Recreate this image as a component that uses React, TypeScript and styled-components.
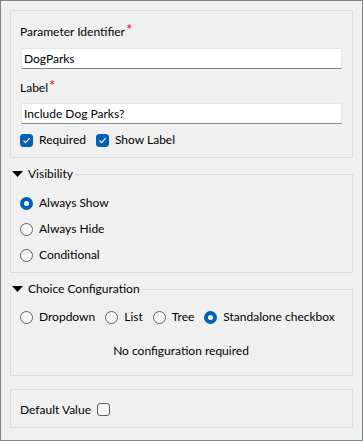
import styled, { createGlobalStyle } from 'styled-components';

const GlobalStyle = createGlobalStyle`
  html, body {
    margin: 0;
    padding: 0;
    background: #ffffff;
  }
  body {
    font-family: Lato, "Noto Sans", sans-serif;
    font-size: 12px;
    color: #000;
  }
`;

const Frame = styled.div`
  box-sizing: border-box;
  width: 363px;
  height: 441px;
  border: 1px solid #80848c;
  background: #f0f0f0;
  padding: 9px;
  display: flex;
  flex-direction: column;
`;

const Panel = styled.div<{ $mt?: number; $pad: string }>`
  border: 1px solid #dcdcdc;
  padding: ${(p) => p.$pad};
  margin-top: ${(p) => p.$mt ?? 0}px;
  display: flex;
  flex-direction: column;
`;

const FieldLabel = styled.div<{ $mt?: number }>`
  line-height: 16px;
  margin-top: ${(p) => p.$mt ?? 0}px;
`;

const Star = styled.span`
  color: #e81123;
  font-size: 15px;
  line-height: 0;
  position: relative;
  top: -1px;
  margin-left: 1px;
`;

const TextBox = styled.input<{ $mt: number }>`
  box-sizing: border-box;
  height: 21px;
  margin: ${(p) => p.$mt}px 0 0 1px;
  padding: 0 2px;
  border: 1px solid #e6e6e6;
  border-bottom-color: #868686;
  background: #fff;
  font: inherit;
  color: #000;
  outline: none;
`;

const Row = styled.div<{ $gap: number; $mt?: number }>`
  display: flex;
  align-items: center;
  gap: ${(p) => p.$gap}px;
  margin-top: ${(p) => p.$mt ?? 0}px;
  white-space: nowrap;
`;

const Option = styled.label`
  display: flex;
  align-items: center;
  gap: 6px;
  line-height: 16px;
`;

const Box = styled.span<{ $on?: boolean }>`
  box-sizing: border-box;
  width: 13px;
  height: 13px;
  border-radius: 3px;
  display: inline-flex;
  align-items: center;
  justify-content: center;
  background: ${(p) => (p.$on ? '#005fb8' : '#f7f7f7')};
  border: 1px solid ${(p) => (p.$on ? '#005fb8' : '#5f5f5f')};
`;

const Dot = styled.span<{ $on?: boolean }>`
  box-sizing: border-box;
  width: 13px;
  height: 13px;
  border-radius: 50%;
  background: ${(p) => (p.$on ? '#fff' : '#f7f7f7')};
  border: ${(p) => (p.$on ? '4px solid #005fb8' : '1px solid #5f5f5f')};
`;

const Group = styled.fieldset<{ $mt: number }>`
  margin: ${(p) => p.$mt}px 0 0;
  border: 1px solid #dcdcdc;
  padding: 0 10px 4px 9px;
  min-width: 0;
`;

const Legend = styled.legend`
  display: flex;
  align-items: center;
  gap: 5px;
  padding: 0 2px 0 1px;
  margin-left: -9px;
  line-height: 16px;
`;

const RadioList = styled.div`
  display: flex;
  flex-direction: column;
  padding-top: 8px;
`;

const RadioRow = styled(Option)`
  height: 26px;
`;

const Note = styled.div`
  text-align: center;
  line-height: 16px;
  margin: 18px 0 12px;
`;

const Check = ({ on }: { on?: boolean }) => (
  <Box $on={on}>
    {on && (
      <svg width="9" height="9" viewBox="0 0 9 9">
        <path d="M1.5 4.6 L3.6 6.6 L7.6 2.2" fill="none" stroke="#fff" strokeWidth="1.2" />
      </svg>
    )}
  </Box>
);

const Caret = () => (
  <svg width="11" height="6" viewBox="0 0 11 6">
    <polygon points="0,0 11,0 5.5,6" fill="#000" />
  </svg>
);

export default function App() {
  return (
    <>
      <GlobalStyle />
      <Frame>
        <Panel $pad="13px 10px 9px 9px">
          <FieldLabel>
            Parameter Identifier<Star>*</Star>
          </FieldLabel>
          <TextBox $mt={8} defaultValue="DogParks" />
          <FieldLabel $mt={11}>
            Label<Star>*</Star>
          </FieldLabel>
          <TextBox $mt={7} defaultValue="Include Dog Parks?" />
          <Row $gap={10} $mt={8}>
            <Option>
              <Check on />
              Required
            </Option>
            <Option>
              <Check on />
              Show Label
            </Option>
          </Row>
        </Panel>

        <Group $mt={8}>
          <Legend>
            <Caret />
            Visibility
          </Legend>
          <RadioList>
            <RadioRow>
              <Dot $on />
              Always Show
            </RadioRow>
            <RadioRow>
              <Dot />
              Always Hide
            </RadioRow>
            <RadioRow>
              <Dot />
              Conditional
            </RadioRow>
          </RadioList>
        </Group>

        <Group $mt={8}>
          <Legend>
            <Caret />
            Choice Configuration
          </Legend>
          <Row $gap={10} $mt={12}>
            <Option>
              <Dot />
              Dropdown
            </Option>
            <Option>
              <Dot />
              List
            </Option>
            <Option>
              <Dot />
              Tree
            </Option>
            <Option>
              <Dot $on />
              Standalone checkbox
            </Option>
          </Row>
          <Note>No configuration required</Note>
        </Group>

        <Panel $mt={13} $pad="12px 10px 10px 9px">
          <Row $gap={6}>
            Default Value
            <Check />
          </Row>
        </Panel>
      </Frame>
    </>
  );
}
